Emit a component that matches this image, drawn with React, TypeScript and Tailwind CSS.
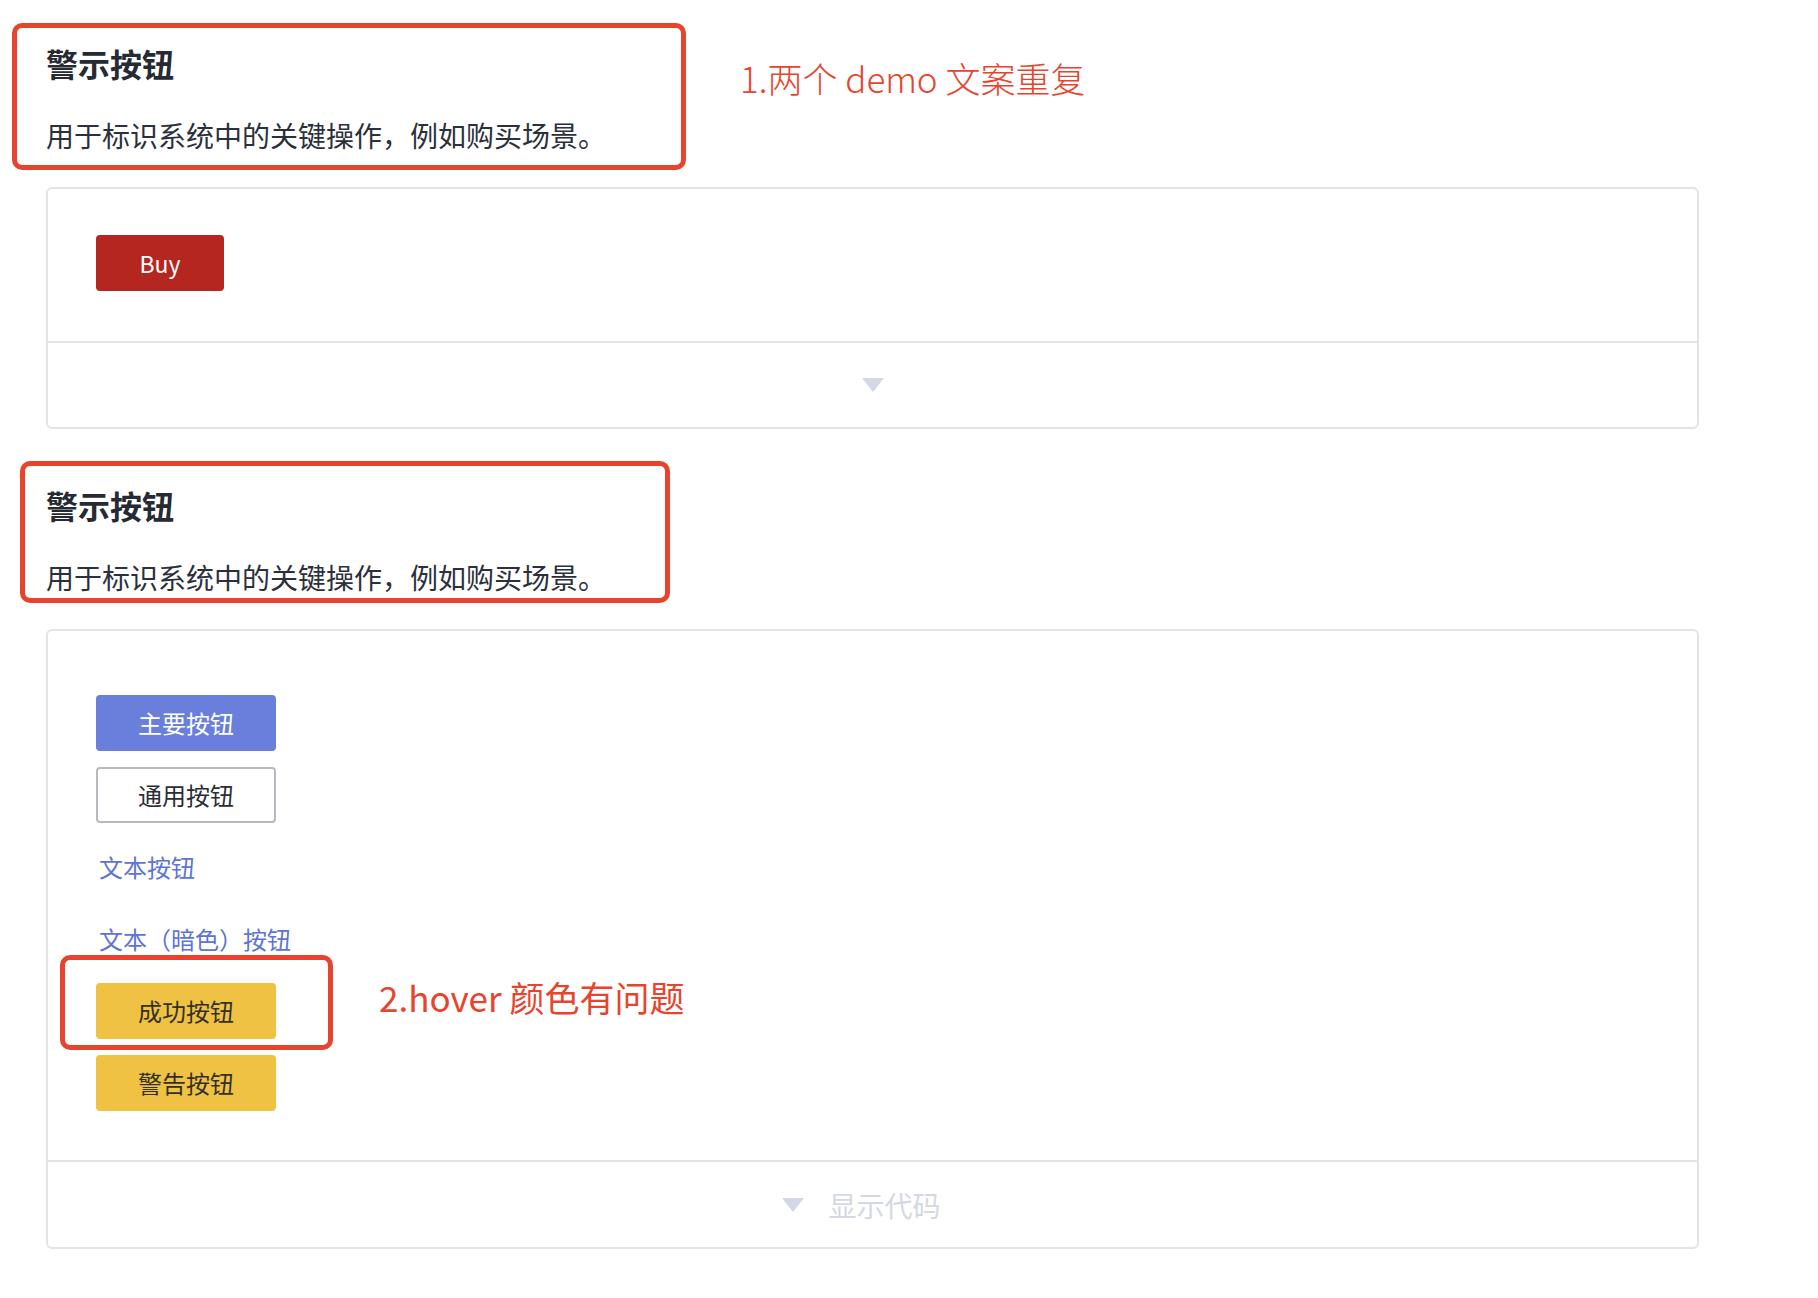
import React from 'react';

const cjk = { fontFamily: '"Noto Sans CJK SC", "Noto Sans", sans-serif' };

const Caret = ({ className }: { className?: string }) => (
  <svg width="22" height="14" viewBox="0 0 22 14" className={className}>
    <path d="M0 0 H22 L11 14 Z" fill="#d2d9e5" />
  </svg>
);

const DemoFooter = ({ label }: { label?: string }) => (
  <div className="flex h-[84px] items-center justify-center gap-[20px]">
    <Caret />
    {label && <span className="text-[27px] text-[#d3d9e3]">{label}</span>}
  </div>
);

const Heading = ({ className }: { className?: string }) => (
  <div className={className}>
    <h2 className="text-[32px] font-bold leading-[48px] text-[#262a33]">警示按钮</h2>
    <p className="mt-[26px] text-[28px] leading-[44px] text-[#2b303b]">
      用于标识系统中的关键操作，例如购买场景。
    </p>
  </div>
);

const App: React.FC = () => {
  return (
    <div className="relative min-h-[1298px] w-[1818px] bg-white" style={cjk}>
      <div className="pl-[46px]">
        {/* first demo */}
        <Heading className="pt-[39px]" />
        <div className="mt-[30px] w-[1653px] rounded-[6px] border-2 border-[#e2e4e9]">
          <div className="pl-[48px] pt-[46px] pb-[50px] border-b-2 border-[#e2e4e9]">
            <button className="h-[56px] w-[128px] rounded-[4px] bg-[#b4261f] text-[23px] text-white">
              Buy
            </button>
          </div>
          <DemoFooter />
        </div>

        {/* second demo */}
        <Heading className="pt-[52px]" />
        <div className="mt-[30px] w-[1653px] rounded-[6px] border-2 border-[#e2e4e9]">
          <div className="flex flex-col items-start gap-[16px] pl-[48px] pt-[64px] pb-[49px] border-b-2 border-[#e2e4e9]">
            <button className="h-[56px] w-[180px] rounded-[4px] bg-[#6a7fdb] text-[24px] text-white">
              主要按钮
            </button>
            <button className="h-[56px] w-[180px] rounded-[4px] border-2 border-[#b6b9bf] bg-white text-[24px] text-[#2a2d33]">
              通用按钮
            </button>
            <button className="h-[56px] px-[3px] text-[24px] text-[#5d73d5]">文本按钮</button>
            <button className="h-[56px] px-[3px] text-[24px] text-[#5d73d5]">文本（暗色）按钮</button>
            <button className="h-[56px] w-[180px] rounded-[4px] bg-[#f0c244] text-[24px] text-[#33302a]">
              成功按钮
            </button>
            <button className="h-[56px] w-[180px] rounded-[4px] bg-[#f0c244] text-[24px] text-[#33302a]">
              警告按钮
            </button>
          </div>
          <div className="flex h-[85px] items-center justify-center gap-[24px] pr-[22px]">
            <Caret />
            <span className="text-[28px] text-[#d3d9e3]">显示代码</span>
          </div>
        </div>
      </div>

      {/* review annotations */}
      <div className="absolute left-[12px] top-[23px] h-[147px] w-[674px] rounded-[10px] border-[5px] border-[#e8432d]" />
      <div className="absolute left-[740px] top-[54px] text-[35px] font-light leading-[48px] text-[#e8432d]">
        1.两个 demo 文案重复
      </div>
      <div className="absolute left-[20px] top-[461px] h-[142px] w-[650px] rounded-[10px] border-[5px] border-[#e8432d]" />
      <div className="absolute left-[60px] top-[955px] h-[95px] w-[273px] rounded-[10px] border-[5px] border-[#e8432d]" />
      <div className="absolute left-[379px] top-[973px] text-[35px] leading-[48px] text-[#e8432d]">
        2.hover 颜色有问题
      </div>
    </div>
  );
};

export default App;
